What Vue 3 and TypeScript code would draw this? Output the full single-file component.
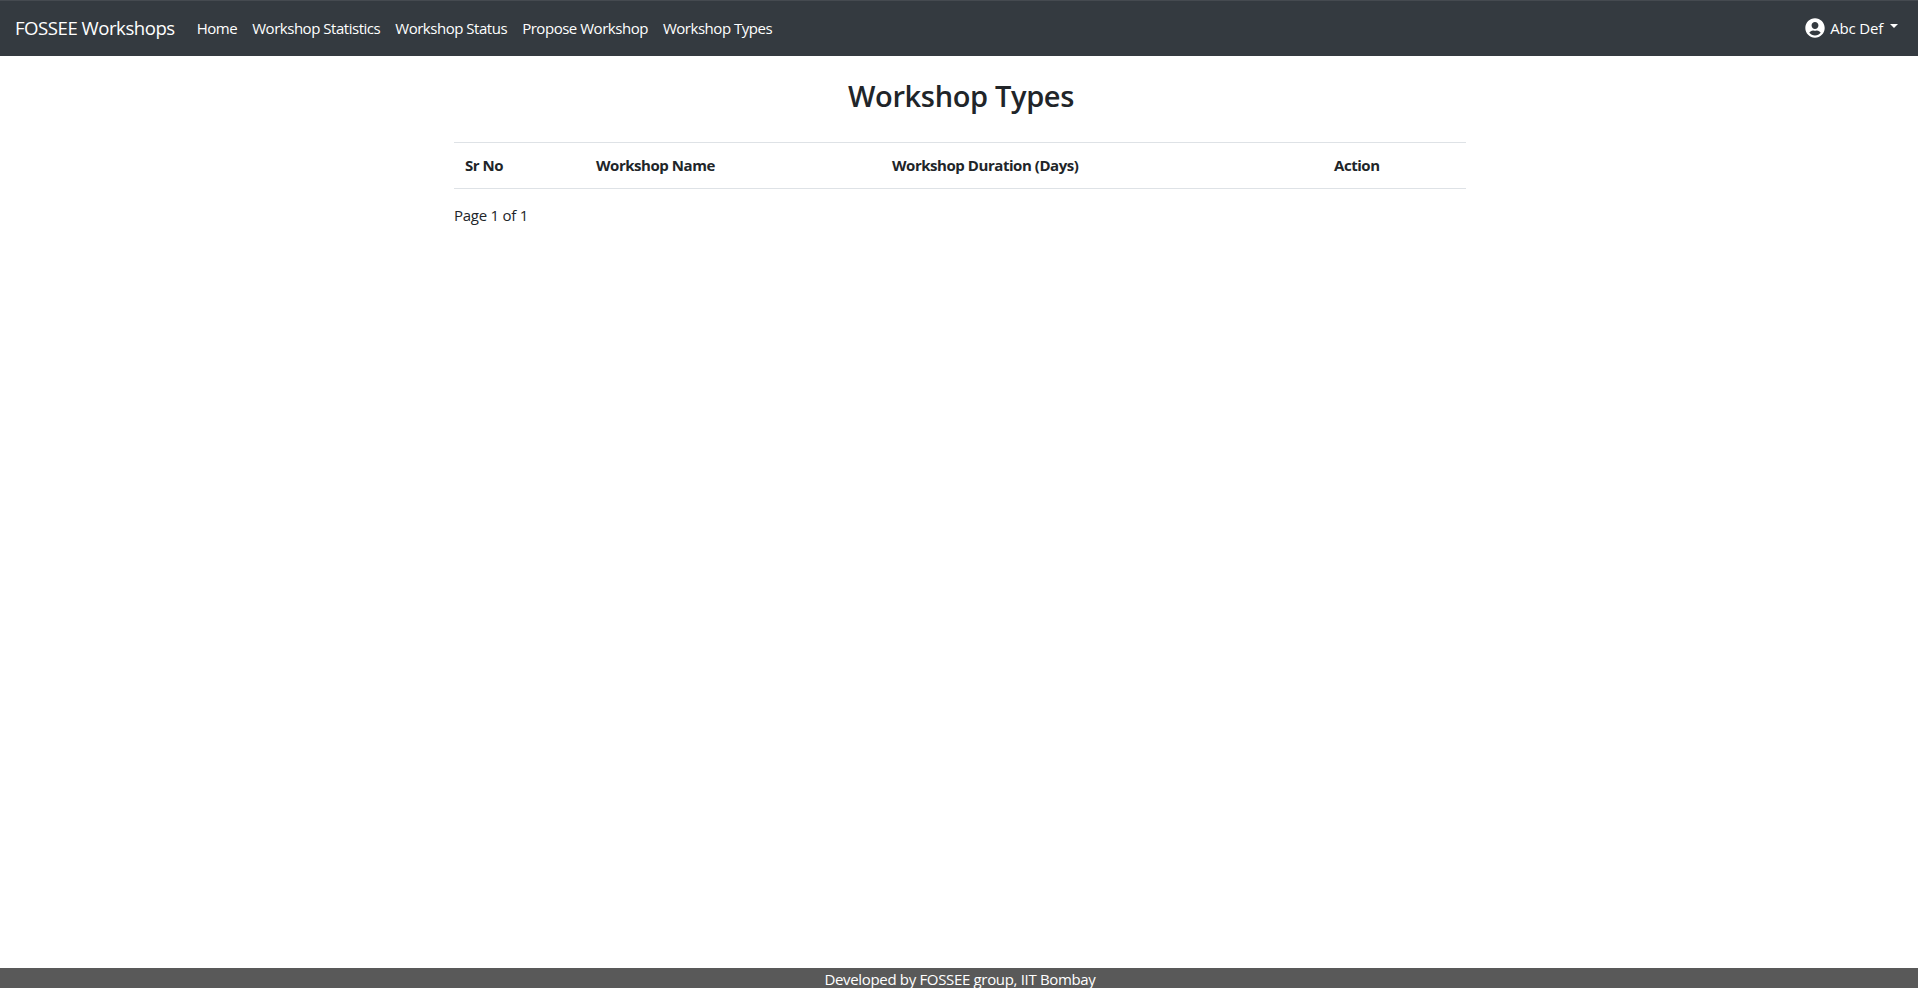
<script setup lang="ts">
const links: string[] = ['Home', 'Workshop Statistics', 'Workshop Status', 'Propose Workshop', 'Workshop Types']
const columns: { label: string; width: string }[] = [
  { label: 'Sr No', width: '131px' },
  { label: 'Workshop Name', width: '296px' },
  { label: 'Workshop Duration (Days)', width: '442px' },
  { label: 'Action', width: '143px' }
]
</script>

<template>
  <div class="page">
    <nav class="navbar">
      <a class="brand">FOSSEE Workshops</a>
      <ul class="nav-links">
        <li v-for="link in links" :key="link"><a>{{ link }}</a></li>
      </ul>
      <div class="user">
        <svg class="avatar" viewBox="0 0 496 512" aria-hidden="true">
          <path fill="currentColor" d="M248 8C111 8 0 119 0 256s111 248 248 248 248-111 248-248S385 8 248 8zm0 96c48.600 0 88 39.400 88 88s-39.400 88-88 88-88-39.400-88-88 39.400-88 88-88zm0 344c-58.700 0-111.300-26.600-146.500-68.200 18.800-35.400 55.600-59.800 98.500-59.800 2.400 0 4.800.4 7.100 1.100 13 4.200 26.600 6.900 40.900 6.900 14.300 0 28-2.700 40.900-6.900 2.300-.7 4.700-1.100 7.100-1.100 42.900 0 79.700 24.400 98.500 59.800C359.300 421.400 306.700 448 248 448z" />
        </svg>
        <span>Abc Def</span>
        <i class="caret"></i>
      </div>
    </nav>

    <main class="content">
      <h2 class="title">Workshop Types</h2>
      <table class="table">
        <colgroup>
          <col v-for="col in columns" :key="col.label" :style="{ width: col.width }" />
        </colgroup>
        <thead>
          <tr>
            <th v-for="col in columns" :key="col.label">{{ col.label }}</th>
          </tr>
        </thead>
      </table>
      <p class="pager">Page 1 of 1</p>
    </main>

    <footer class="footer">Developed by FOSSEE group, IIT Bombay</footer>
  </div>
</template>

<style>
html, body { margin: 0; padding: 0; background: #fff; }
</style>

<style scoped>
.page {
  display: flex;
  flex-direction: column;
  height: 988px;
  overflow: hidden;
  font-family: "Open Sans", "Noto Sans", sans-serif;
  font-size: 15px;
  color: #212529;
}
.navbar {
  display: flex;
  align-items: center;
  height: 56px;
  padding: 0 20px 2px 15px;
  box-sizing: border-box;
  background: #343a40;
  border-top: 1px solid #454a50;
  color: #fff;
  flex: none;
}
.brand {
  font-size: 18.600px;
  letter-spacing: -0.480px;
  margin-right: 22px;
  white-space: nowrap;
}
.nav-links {
  display: flex;
  gap: 15px;
  list-style: none;
  margin: 0;
  padding: 0;
  font-size: 15px;
  letter-spacing: -0.470px;
  white-space: nowrap;
}
.user {
  margin-left: auto;
  display: flex;
  align-items: center;
  font-size: 15px;
  letter-spacing: -0.200px;
  white-space: nowrap;
}
.avatar {
  width: 20px;
  height: 20px;
  margin-right: 5px;
}
.caret {
  width: 0;
  height: 0;
  margin-left: 7px;
  margin-bottom: 3px;
  border-top: 4.500px solid #fff;
  border-left: 4.500px solid transparent;
  border-right: 4.500px solid transparent;
}
.content {
  flex: 1;
  box-sizing: border-box;
  width: 1014px;
  margin: 0 auto;
  padding-left: 2px;
}
.title {
  margin: 21px 0 27px;
  padding-left: 2px;
  font-size: 29px;
  font-weight: 600;
  line-height: 38px;
  text-align: center;
  letter-spacing: -0.350px;
}
.table {
  width: 100%;
  border-collapse: collapse;
  table-layout: fixed;
}
.table th {
  height: 46px;
  padding: 0 12px 2px 11px;
  box-sizing: border-box;
  text-align: left;
  font-weight: 700;
  font-size: 15px;
  letter-spacing: -0.450px;
  border-top: 1px solid #dee2e6;
  border-bottom: 1px solid #dee2e6;
}
.pager {
  margin: 15px 0 0;
  line-height: 22px;
  letter-spacing: -0.250px;
}
.footer {
  flex: none;
  height: 20px;
  padding-left: 2px;
  line-height: 22px;
  text-align: center;
  background: #595959;
  color: #fff;
  letter-spacing: -0.330px;
  white-space: nowrap;
}
</style>
